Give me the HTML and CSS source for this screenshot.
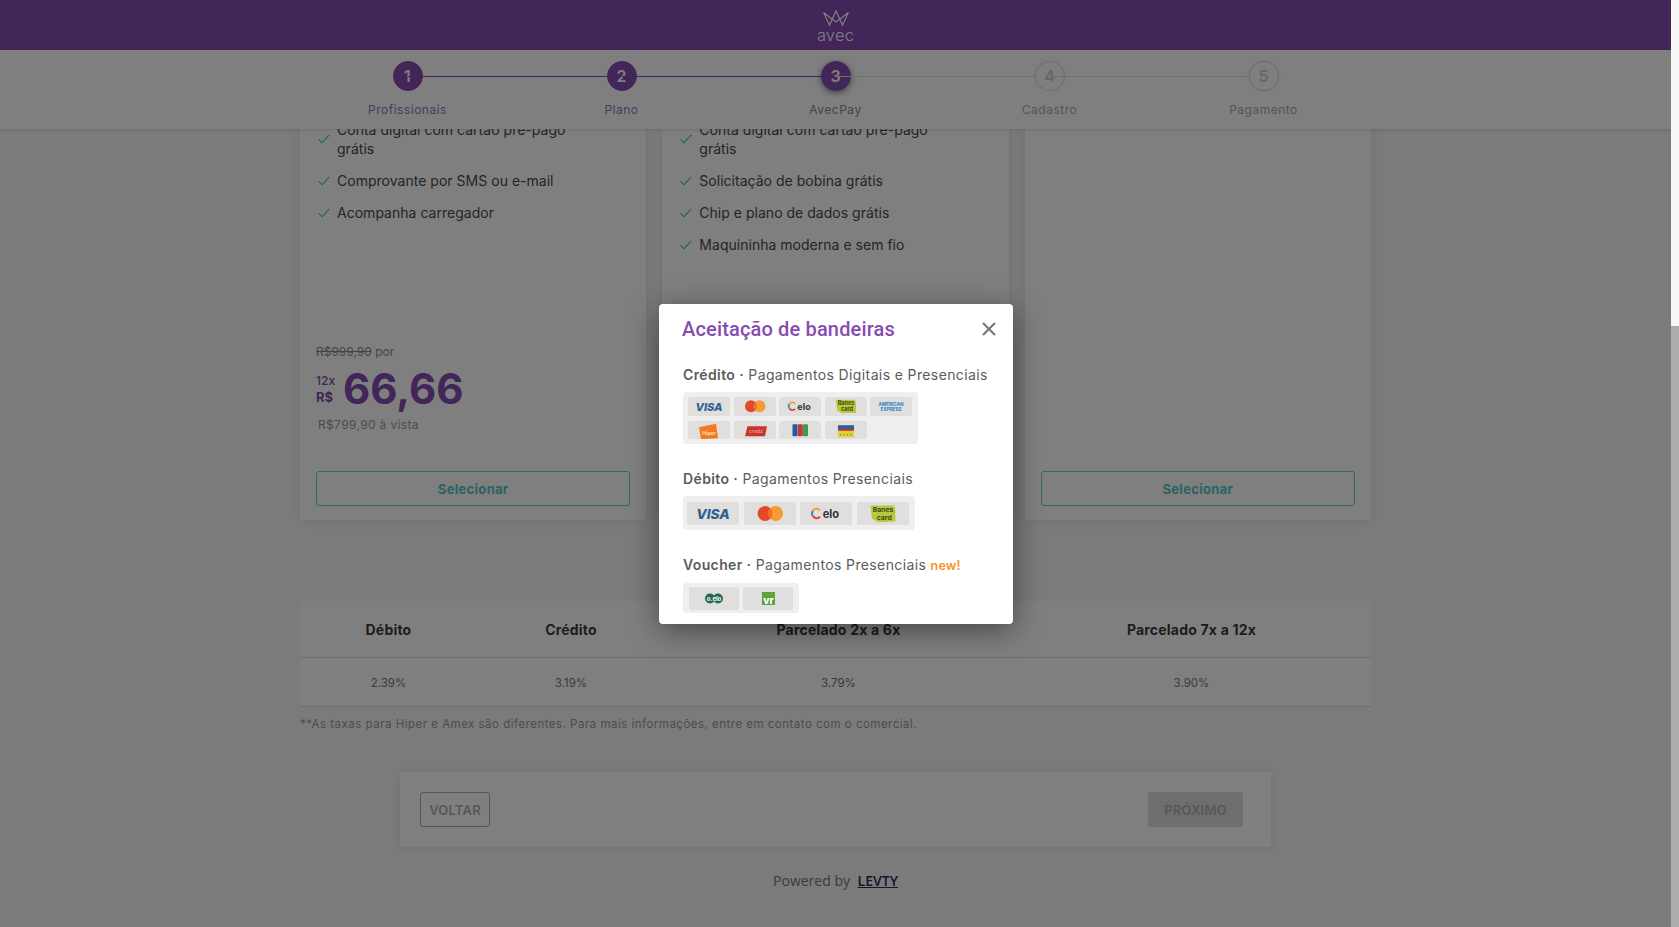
FILE: index.html
```html
<!DOCTYPE html>
<html lang="pt-BR">
<head>
<meta charset="utf-8">
<title>Avec</title>
<link rel="stylesheet" href="styles.css">
</head>
<body>
<svg class="defs" width="0" height="0" aria-hidden="true">
  <defs>
    <symbol id="check" viewBox="0 0 12 10"><path d="M.7 5.4 4 8.8 11.3.8" fill="none" stroke="currentColor" stroke-width="1.1"/></symbol>
    <symbol id="visa" viewBox="0 0 42 18"><text x="21" y="13.500" text-anchor="middle" class="t-visa">VISA</text></symbol>
    <symbol id="mc" viewBox="0 0 42 18"><circle cx="17" cy="9" r="6" fill="#e2492a"/><circle cx="25.500" cy="9" r="6" fill="#f69a35"/><path d="M21.250 4.800a6 6 0 0 1 0 8.400 6 6 0 0 1 0-8.400z" fill="#e96f2c"/></symbol>
    <symbol id="elo" viewBox="0 0 42 18"><path d="M10.400 6.800A3.800 3.800 0 0 1 16.200 6.300" fill="none" stroke="#f0a52b" stroke-width="1.700"/><path d="M10.400 11.200A3.800 3.800 0 0 1 10.400 6.800" fill="none" stroke="#3d8ac7" stroke-width="1.700"/><path d="M16.200 11.700A3.800 3.800 0 0 1 10.400 11.200" fill="none" stroke="#e2492a" stroke-width="1.700"/><text x="25" y="12.300" text-anchor="middle" class="t-elo">elo</text></symbol>
    <symbol id="banes" viewBox="0 0 42 18"><path d="M11 2.500h19l1 4v9l-14 .5-5-3z" fill="#b9c83a"/><text x="21" y="8" text-anchor="middle" class="t-banes">Banes</text><text x="22" y="14" text-anchor="middle" class="t-banes">card</text></symbol>
    <symbol id="amex" viewBox="0 0 42 18"><text x="21" y="8.500" text-anchor="middle" class="t-amex">AMERICAN</text><text x="21" y="13.500" text-anchor="middle" class="t-amex">EXPRESS</text></symbol>
    <symbol id="hiper" viewBox="0 0 42 18"><path d="M11 6 28 2.500l2 14.500-17 1z" fill="#f37a20"/><text x="21" y="14" text-anchor="middle" class="t-hiper">Hiper</text></symbol>
    <symbol id="cabal" viewBox="0 0 42 18"><path d="M13.500 5h19.500l-2 10H11z" fill="#c7352d"/><text x="22" y="11.500" text-anchor="middle" class="t-cabal">credz</text></symbol>
    <symbol id="jcb" viewBox="0 0 42 18"><rect x="13.500" y="3" width="5" height="12" rx="1" fill="#2a5a9b"/><rect x="18.800" y="3" width="5" height="12" rx="1" fill="#c8343f"/><rect x="24" y="3" width="5" height="12" rx="1" fill="#3f9a4b"/></symbol>
    <symbol id="bnr" viewBox="0 0 42 18"><rect x="13" y="4" width="16" height="12" fill="#d9d335"/><rect x="13" y="4" width="16" height="5" fill="#2c5f9e"/><path d="M13 9.500c3-3 13-3 16 0z" fill="#c8352d"/><path d="M15 13.500h12" stroke="#4a4a2a" stroke-width=".8" stroke-dasharray="1 2.500"/></symbol>
    <symbol id="ouro" viewBox="0 0 50 23"><circle cx="21" cy="11.500" r="5" fill="#1f6b57"/><circle cx="29" cy="11.500" r="5" fill="#1f6b57"/><text x="25" y="14" text-anchor="middle" class="t-ouro">o.elo</text></symbol>
    <symbol id="vr" viewBox="0 0 50 23"><rect x="19" y="5" width="13" height="13" fill="#5ca23f"/><text x="25.500" y="16.500" text-anchor="middle" class="t-vr">vr</text></symbol>
  </defs>
</svg>

<div class="page">
  <div class="app">
    <header class="topbar">
      <div class="brand">
        <svg class="crown" width="26" height="16" viewBox="0 0 26 16"><path d="M.6 2.500 6.500 15 13 1 19.500 15 25.400 2.500 13 12z" fill="none" stroke="#fff" stroke-width="1.200"/></svg>
        <span class="brand-name">avec</span>
      </div>
    </header>

    <nav class="stepper">
      <div class="step done first"><span class="dot">1</span><span class="lbl">Profissionais</span></div>
      <div class="step done"><span class="dot">2</span><span class="lbl">Plano</span></div>
      <div class="step done current"><span class="dot">3</span><span class="lbl">AvecPay</span></div>
      <div class="step"><span class="dot">4</span><span class="lbl">Cadastro</span></div>
      <div class="step"><span class="dot">5</span><span class="lbl">Pagamento</span></div>
    </nav>

    <main class="content">
      <section class="plans">
        <article class="card">
          <ul class="features">
            <li><svg class="chk"><use href="#check"/></svg><span>Conta digital com cartão pré-pago<br>grátis</span></li>
            <li><svg class="chk"><use href="#check"/></svg><span>Comprovante por SMS ou e-mail</span></li>
            <li><svg class="chk"><use href="#check"/></svg><span>Acompanha carregador</span></li>
          </ul>
          <div class="price">
            <p class="old"><s>R$999,90</s> por</p>
            <div class="now"><div class="parc"><span>12x</span><b>R$</b></div><strong>66,66</strong></div>
            <p class="cash">R$799,90 à vista</p>
          </div>
          <button class="select">Selecionar</button>
        </article>
        <article class="card">
          <ul class="features">
            <li><svg class="chk"><use href="#check"/></svg><span>Conta digital com cartão pré-pago<br>grátis</span></li>
            <li><svg class="chk"><use href="#check"/></svg><span>Solicitação de bobina grátis</span></li>
            <li><svg class="chk"><use href="#check"/></svg><span>Chip e plano de dados grátis</span></li>
            <li><svg class="chk"><use href="#check"/></svg><span>Maquininha moderna e sem fio</span></li>
          </ul>
        </article>
        <article class="card">
          <ul class="features"></ul>
          <button class="select">Selecionar</button>
        </article>
      </section>

      <section class="rates">
        <div class="rates-row head"><span>Débito</span><span>Crédito</span><span>Parcelado 2x a 6x</span><span>Parcelado 7x a 12x</span></div>
        <div class="rates-row vals"><span>2.39%</span><span>3.19%</span><span>3.79%</span><span>3.90%</span></div>
      </section>
      <p class="note">**As taxas para Hiper e Amex são diferentes. Para mais informações, entre em contato com o comercial.</p>

      <div class="actions">
        <button class="back">VOLTAR</button>
        <button class="next">PRÓXIMO</button>
      </div>
      <footer class="powered">Powered by <a href="#">LEVTY</a></footer>
    </main>
  </div>

  <div class="scrollbar"><div class="thumb"></div></div>
  <div class="overlay"></div>

  <div class="modal">
    <div class="modal-head">
      <h2>Aceitação de bandeiras</h2>
      <svg class="close" width="14" height="14" viewBox="0 0 14 14"><path d="M1 1l12 12M13 1 1 13" stroke="#757575" stroke-width="2" fill="none"/></svg>
    </div>
    <h3 class="sec"><b>Crédito ·</b> Pagamentos Digitais e Presenciais</h3>
    <div class="brands five">
      <svg class="tile"><use href="#visa"/></svg><svg class="tile"><use href="#mc"/></svg><svg class="tile"><use href="#elo"/></svg><svg class="tile"><use href="#banes"/></svg><svg class="tile"><use href="#amex"/></svg>
      <svg class="tile"><use href="#hiper"/></svg><svg class="tile"><use href="#cabal"/></svg><svg class="tile"><use href="#jcb"/></svg><svg class="tile"><use href="#bnr"/></svg>
    </div>
    <h3 class="sec debit"><b>Débito ·</b> Pagamentos Presenciais</h3>
    <div class="brands four">
      <svg class="tile" viewBox="0 0 42 18"><use href="#visa"/></svg><svg class="tile" viewBox="0 0 42 18"><use href="#mc"/></svg><svg class="tile" viewBox="0 0 42 18"><use href="#elo"/></svg><svg class="tile" viewBox="0 0 42 18"><use href="#banes"/></svg>
    </div>
    <h3 class="sec voucher"><b>Voucher ·</b> Pagamentos Presenciais <em>new!</em></h3>
    <div class="brands two">
      <svg class="tile"><use href="#ouro"/></svg><svg class="tile"><use href="#vr"/></svg>
    </div>
  </div>
</div>
</body>
</html>
```

FILE: styles.css
```css
* { box-sizing: border-box; }
html, body { margin: 0; height: 100%; }
body { font-family: Inter, "Open Sans", sans-serif; color: #333; background: #f6f6f6; overflow: hidden; }
.defs { position: absolute; }
p, ul, h2, h3 { margin: 0; padding: 0; }
button { font-family: inherit; cursor: pointer; }

.page { position: relative; height: 927px; display: flex; overflow: hidden; }
.app { flex: 1; min-width: 0; display: flex; flex-direction: column; height: 927px; }

.scrollbar { width: 8px; flex: none; background: #f7f7f7; padding-top: 326px; position: relative; z-index: 3; }
.thumb { height: 601px; background: #acacac; }

.overlay { position: absolute; inset: 0 8px 0 0; background: rgba(0,0,0,.5); z-index: 1; }

/* header */
.topbar { height: 50px; flex: none; background: #864cb2; display: flex; justify-content: center; align-items: flex-start; }
.brand { display: flex; flex-direction: column; align-items: center; padding-top: 10px; color: #fff; }
.crown { display: block; }
.brand-name { font: 300 16.500px/16px Inter, sans-serif; letter-spacing: .2px; margin-top: 1px; color: #fff; }

/* stepper */
.stepper { height: 79px; flex: none; background: #fff; display: flex; justify-content: center; padding-top: 10px; box-shadow: 0 1px 4px rgba(0,0,0,.12); position: relative; z-index: 1; }
.step { width: 214px; display: flex; flex-direction: column; align-items: center; position: relative; }
.step::before { content: ""; position: absolute; top: 16px; left: -50%; width: 100%; height: 1px; background: #ddd; }
.step.done::before { background: #864cb2; }
.step.first::before { display: none; }
.dot { width: 30px; height: 30px; border-radius: 50%; border: 1px solid #ddd; background: #fff; color: #ccc; font-size: 16px; font-weight: 600; display: flex; align-items: center; justify-content: center; position: relative; box-shadow: 0 0 3px rgba(0,0,0,.1); margin-bottom: 9px; margin-top: 1px; }
.done .dot { background: #864cb2; border-color: #864cb2; color: #fff; box-shadow: none; }
.current .dot { box-shadow: 0 2px 6px rgba(0,0,0,.5); }
.lbl { font-size: 12px; line-height: 20px; letter-spacing: .5px; color: #aaa; }
.done .lbl { color: #9a75b8; }
.current .lbl { color: #9080a0; }

/* content */
.content { flex: 1; min-height: 0; overflow: hidden; display: flex; flex-direction: column; align-items: center; }
.plans { display: flex; gap: 16px; width: 1071px; margin-top: -9px; flex: none; }
.card { flex: 1; height: 400px; background: #fff; box-shadow: 0 0 12px rgba(0,0,0,.09); padding: 0 16px 14px; display: flex; flex-direction: column; }
.features { list-style: none; font-size: 14px; color: #4a4a4a; flex: none; display: flex; flex-direction: column; gap: 13px; }
.features li { display: flex; align-items: center; line-height: 19px; letter-spacing: .02px; }
.chk { width: 12px; height: 10px; color: #3fbfc2; margin: 0 7px 0 2px; flex: none; }

.price { margin-top: auto; }
.old { font-size: 12px; line-height: 16px; color: #888; }
.now { display: flex; align-items: center; margin-top: 8px; color: #864cb2; height: 42px; }
.parc { display: flex; flex-direction: column; font-size: 12px; font-weight: 500; line-height: 17px; width: 27px; }
.parc b { font-weight: 700; font-size: 13px; }
.now strong { font-size: 42px; font-weight: 700; line-height: 42px; }
.cash { font-size: 12px; line-height: 16px; color: #999; margin: 7px 0 0 2px; letter-spacing: .35px; }
.select { height: 35px; margin-top: 38px; padding-top: 2px; flex: none; background: transparent; border: 1px solid #60d0d0; border-radius: 3px; color: #52c6c6; font-size: 13px; font-weight: 700; letter-spacing: .3px; }
.card:last-child .select { margin-top: auto; }

/* rates */
.rates { width: 1071px; margin-top: 81px; flex: none; background: #fff; }
.rates-row { display: grid; grid-template-columns: 177px 188px 347px 359px; text-align: center; }
.head { height: 57px; align-items: center; font-size: 14px; font-weight: 700; color: #3a3a3a; border-bottom: 1px solid #ddd; letter-spacing: .2px; }
.vals { height: 49px; align-items: center; padding-top: 2px; font-size: 11.500px; color: #777; border-bottom: 1px solid #ddd; }
.note { width: 1071px; margin-top: 9px; font-size: 11.500px; line-height: 16px; color: #999; letter-spacing: .49px; flex: none; white-space: nowrap; }

.actions { width: 871px; height: 75px; margin-top: 40px; flex: none; background: #fff; box-shadow: 0 0 10px rgba(0,0,0,.08); padding: 20px 28px 20px 20px; display: flex; justify-content: space-between; }
.back, .next { height: 35px; font-size: 13px; font-weight: 600; border-radius: 3px; letter-spacing: .2px; }
.back { width: 70px; background: transparent; border: 1px solid #aaa; color: #b0b0b0; }
.next { width: 95px; background: #dcdcdc; border: 0; color: #b0b0b0; }

.powered { margin-top: 24px; font: 400 14px/20px "Open Sans", sans-serif; color: #777; }
.powered a { color: #2c2c54; margin-left: 4px; font-weight: 600; text-decoration: underline; }

/* modal */
.modal { position: absolute; left: 659px; top: 304px; width: 354px; height: 320px; background: #fff; border-radius: 4px; box-shadow: 0 6px 30px rgba(0,0,0,.45); z-index: 2; padding: 0 24px; }
.modal-head { height: 52px; display: flex; align-items: center; justify-content: space-between; margin-right: -7px; }
.modal-head h2 { font: 500 20px/26px Roboto, sans-serif; letter-spacing: .16px; margin: -2px 0 0 -1px; color: #864cb2; }
.close { display: block; margin-top: -3px; }
.sec { font-size: 14px; line-height: 20px; font-weight: 400; color: #5c5c5c; letter-spacing: .38px; margin-top: 9px; white-space: nowrap; }
.sec b { font-weight: 600; }
.sec em { font-style: normal; font-weight: 600; font-size: 12.500px; letter-spacing: .2px; color: #f7931e; }
.debit { margin-top: 25px; }
.voucher { margin-top: 25px; }
.brands { display: grid; background: #efefef; border-radius: 4px; margin-top: 7px; }
.tile { display: block; background: #e0dfde; border-radius: 2px; }
.five { width: 235px; height: 52px; padding: 5px; grid-template-columns: repeat(5, 42px); grid-auto-rows: 18.500px; column-gap: 3.500px; row-gap: 5px; margin-top: 7px; }
.five .tile { width: 42px; height: 18.500px; }
.four { width: 232px; height: 34px; padding: 6px 4px 5px; grid-template-columns: repeat(4, 52px); grid-auto-rows: 23px; column-gap: 4.500px; }
.four .tile { width: 52px; height: 23px; }
.two { width: 116px; height: 30px; padding: 4px 5px 3px 6px; grid-template-columns: repeat(2, 50px); grid-auto-rows: 23px; column-gap: 4px; margin-top: 7px; }
.two .tile { width: 50px; height: 23px; }

.t-visa { font: italic 800 11px Inter, sans-serif; fill: #2e6294; }
.t-elo { font: 700 9px Inter, sans-serif; fill: #333; }
.t-banes { font: 700 5.500px Inter, sans-serif; fill: #3a4a20; }
.t-amex { font: 800 4.500px Inter, sans-serif; fill: #3d85c6; }
.t-hiper { font: 700 5px Inter, sans-serif; fill: #fde2a0; }
.t-cabal { font: 700 5px Inter, sans-serif; fill: #e98f80; }
.t-ouro { font: 700 6px Inter, sans-serif; fill: #fff; }
.t-vr { font: 800 10px Inter, sans-serif; fill: #fff; }
```
